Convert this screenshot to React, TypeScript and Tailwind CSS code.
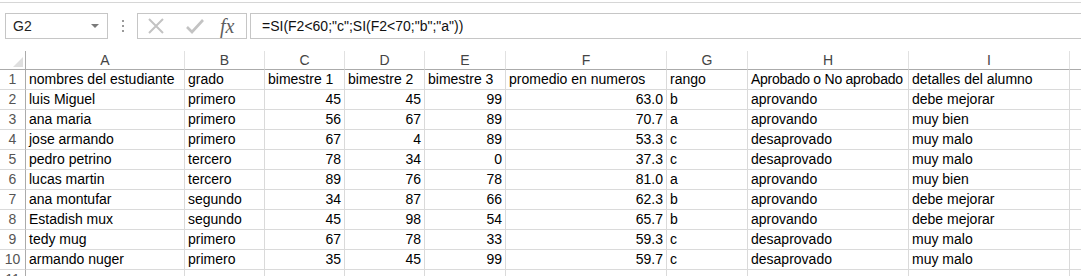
import React from "react";

const cols = ["A", "B", "C", "D", "E", "F", "G", "H", "I", ""];

const rows: (string | number)[][] = [
  ["nombres del estudiante", "grado", "bimestre 1", "bimestre 2", "bimestre 3", "promedio en numeros", "rango", "Aprobado o No aprobado", "detalles del alumno"],
  ["luis Miguel", "primero", 45, 45, 99, "63.0", "b", "aprovando", "debe mejorar"],
  ["ana maria", "primero", 56, 67, 89, "70.7", "a", "aprovando", "muy bien"],
  ["jose armando", "primero", 67, 4, 89, "53.3", "c", "desaprovado", "muy malo"],
  ["pedro petrino", "tercero", 78, 34, 0, "37.3", "c", "desaprovado", "muy malo"],
  ["lucas martin", "tercero", 89, 76, 78, "81.0", "a", "aprovando", "muy bien"],
  ["ana montufar", "segundo", 34, 87, 66, "62.3", "b", "aprovando", "debe mejorar"],
  ["Estadish mux", "segundo", 45, 98, 54, "65.7", "b", "aprovando", "debe mejorar"],
  ["tedy mug", "primero", 67, 78, 33, "59.3", "c", "desaprovado", "muy malo"],
  ["armando nuger", "primero", 35, 45, 99, "59.7", "c", "desaprovado", "muy malo"],
  ["", "", "", "", "", "", "", "", ""],
];

const numericCol = [false, false, true, true, true, true, false, false, false];

function FormulaBar() {
  return (
    <div className="h-[49px] border-t border-[#d6d6d6] mt-[2px] relative">
      <div className="flex items-center h-[26px] mt-[10px]">
        {/* name box */}
        <div className="ml-[5px] w-[103px] h-[26px] border border-[#c6c6c6] flex items-center justify-between pl-[7px] pr-[8px]">
          <span className="text-[14px] text-[#222]">G2</span>
          <svg width="8" height="5" viewBox="0 0 8 5">
            <path d="M0 0 L8 0 L4 4 Z" fill="#7a7a7a" />
          </svg>
        </div>
        <div className="w-[29px] flex flex-col items-center gap-[3px]">
          <span className="w-[2px] h-[2px] bg-[#9a9a9a]" />
          <span className="w-[2px] h-[2px] bg-[#9a9a9a]" />
          <span className="w-[2px] h-[2px] bg-[#9a9a9a]" />
        </div>
        {/* cancel / enter / insert function */}
        <div className="w-[110px] h-[26px] border border-[#c6c6c6] flex items-center">
          <svg width="18" height="18" viewBox="0 0 18 18" className="ml-[9px]">
            <path d="M2 2 L16 16 M16 2 L2 16" stroke="#c3c3c3" strokeWidth="2" />
          </svg>
          <svg width="18" height="18" viewBox="0 0 18 18" className="ml-[21px]">
            <path d="M1 10 L6 15 L17 3" stroke="#c3c3c3" strokeWidth="2.6" fill="none" />
          </svg>
          <span
            className="ml-[16px] text-[20px] italic text-[#5e5e5e] leading-none"
            style={{ fontFamily: '"Liberation Serif", serif' }}
          >
            fx
          </span>
        </div>
        <div className="ml-[3px] flex-1 h-[26px] border-y border-l border-[#c6c6c6] flex items-center pl-[11px]">
          <span className="text-[14px] text-[#111]">=SI(F2&lt;60;"c";SI(F2&lt;70;"b";"a"))</span>
        </div>
      </div>
    </div>
  );
}

export default function App() {
  const template = "26px 159px 80px 80px 80px 81px 161px 81px 161px 161px 40px";
  return (
    <main
      className="w-[1081px] h-[276px] overflow-hidden bg-white"
      style={{ fontFamily: '"Liberation Sans", Arial, sans-serif' }}
    >
      <FormulaBar />
      <div className="grid text-[14px]" style={{ gridTemplateColumns: template }}>
        <div className="h-[19px] border-r border-b border-[#ababab] relative">
          <svg width="10" height="10" viewBox="0 0 10 10" className="absolute left-[13px] top-[6px]">
            <path d="M10 0 L10 10 L0 10 Z" fill="#dfdfdf" />
          </svg>
        </div>
        {cols.map((c, i) => (
          <div
            key={i}
            className="h-[19px] border-r border-r-[#e1e1e1] border-b border-b-[#ababab] text-center leading-[19px] text-[#444]"
          >
            {c}
          </div>
        ))}
        {rows.map((r, ri) => (
          <React.Fragment key={ri}>
            <div className="h-[20px] border-r border-r-[#ababab] border-b border-b-[#dadada] text-center leading-[19px] text-[#555]">
              {ri + 1}
            </div>
            {r.map((v, ci) => (
              <div
                key={ci}
                className={
                  "h-[20px] border-r border-b border-[#dadada] leading-[19px] px-[3px] whitespace-nowrap overflow-hidden text-black " +
                  (ri > 0 && numericCol[ci] ? "text-right" : "text-left") +
                  (ri === 0 && ci === 7 ? " tracking-[-0.25px]" : "")
                }
              >
                {v}
              </div>
            ))}
            <div className="h-[20px] border-r border-b border-[#dadada]" />
          </React.Fragment>
        ))}
      </div>
    </main>
  );
}
